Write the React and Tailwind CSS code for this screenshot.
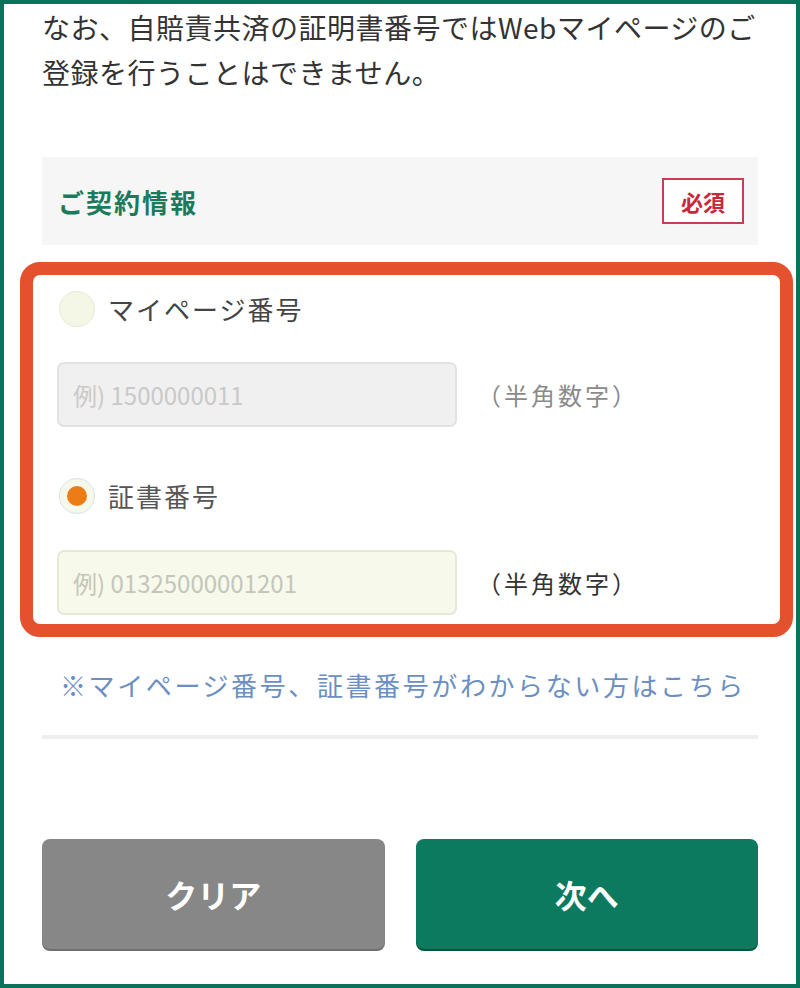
const font = { fontFamily: '"Noto Sans CJK JP", "Noto Sans", sans-serif' }

function Radio({ checked }) {
  return (
    <span
      className={
        'flex h-[36px] w-[36px] flex-shrink-0 items-center justify-center rounded-full border ' +
        (checked ? 'border-[#d6e2ec] bg-[#f6f8ea]' : 'border-[#e6e9d6] bg-[#f5f7e6]')
      }
    >
      {checked && <span className="h-[20px] w-[20px] rounded-full bg-[#ec7d16]" />}
    </span>
  )
}

function NumberField({ placeholder, active }) {
  return (
    <div className="flex items-center">
      <div
        className={
          'flex h-[65px] w-[400px] items-center rounded-[7px] border-2 px-[14px] text-[24px] ' +
          (active ? 'border-[#e6e9d6] bg-[#f7f9ea] text-[#c4c6bc]' : 'border-[#e2e2e2] bg-[#f0f0f0] text-[#c9c9c9]')
        }
      >
        {placeholder}
      </div>
      <span className={'ml-[20px] text-[24px] tracking-[3px] ' + (active ? 'text-[#333]' : 'text-[#8a8a8a]')}>
        （半角数字）
      </span>
    </div>
  )
}

export default function App() {
  return (
    <div style={font} className="box-border h-[988px] w-[800px] overflow-hidden border-4 border-[#0a735c] bg-white">
      <div className="px-[38px] pt-[1px]">
        <p className="text-[28px] leading-[45px] tracking-[0.5px] text-[#333]">
          なお、自賠責共済の証明書番号ではWebマイページのご登録を行うことはできません。
        </p>

        <div className="mt-[62px] flex h-[88px] items-center justify-between bg-[#f6f6f6] pl-[16px] pr-[14px]">
          <span className="text-[26px] font-bold tracking-[2px] text-[#1b7a5c]">ご契約情報</span>
          <span className="flex h-[46px] w-[82px] items-center justify-center border-2 border-[#c2404f] bg-white text-[22px] font-bold text-[#c8283a]">
            必須
          </span>
        </div>

        <div className="ml-[-22px] mr-[-35px] mt-[17px] rounded-[20px] border-[13px] border-[#e4512e] pb-[9px] pl-[24px] pt-[14px]">
          <div className="flex items-center gap-[13px] pl-[2px]">
            <Radio />
            <span className="text-[26px] tracking-[2px] text-[#444]">マイページ番号</span>
          </div>
          <div className="mt-[34px]">
            <NumberField placeholder="例) 1500000011" />
          </div>
          <div className="mt-[49px] flex items-center gap-[13px] pl-[2px]">
            <Radio checked />
            <span className="text-[26px] tracking-[2px] text-[#555]">証書番号</span>
          </div>
          <div className="mt-[35px]">
            <NumberField placeholder="例) 01325000001201" active />
          </div>
        </div>

        <p className="ml-[18px] mt-[28px] text-[26px] leading-[40px] tracking-[2.6px] text-[#6b8fc2]">
          ※マイページ番号、証書番号がわからない方はこちら
        </p>

        <div className="mt-[30px] h-[4px] bg-[#eeeeee]" />

        <div className="mt-[100px] flex gap-[31px]">
          <button className="flex h-[110px] flex-1 items-center justify-center rounded-[8px] bg-[#878787] text-[32px] font-bold text-white shadow-[0_2px_0_#6f6f6f]">
            クリア
          </button>
          <button className="flex h-[110px] flex-1 items-center justify-center rounded-[8px] bg-[#0b7a5e] text-[32px] font-bold text-white shadow-[0_2px_0_#06553f]">
            次へ
          </button>
        </div>
      </div>
    </div>
  )
}
